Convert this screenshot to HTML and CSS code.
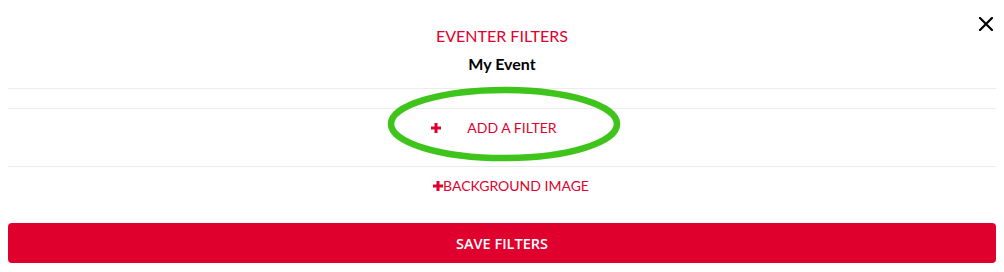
FILE: index.html
```html
<!DOCTYPE html>
<html>
<head>
<meta charset="utf-8">
<link rel="stylesheet" href="styles.css">
</head>
<body>
<div class="modal">
  <button class="close" aria-label="Close">
    <svg width="14" height="14" viewBox="0 0 14 14"><path d="M1 1L13 13M13 1L1 13" stroke="#000" stroke-width="2.2" stroke-linecap="square"/></svg>
  </button>
  <div class="title">EVENTER FILTERS</div>
  <div class="subtitle">My Event</div>
  <div class="divider-top"></div>
  <div class="spacer"></div>
  <div class="row add-row">
    <span class="add">
      <svg class="plus" width="10" height="10" viewBox="0 0 10 10"><path d="M3.5 0h3v3.5H10v3H6.5V10h-3V6.5H0v-3h3.5z" fill="#e0002d"/></svg>
      <span class="add-label">ADD A FILTER</span>
    </span>
    <svg class="annot" width="240" height="80" viewBox="0 0 240 80"><ellipse cx="120" cy="40" rx="113" ry="34" fill="none" stroke="#3ec41a" stroke-width="6.5"/></svg>
  </div>
  <div class="row bg-row">
    <span class="bg">
      <svg class="plus" width="10" height="10" viewBox="0 0 10 10"><path d="M3.5 0h3v3.5H10v3H6.5V10h-3V6.5H0v-3h3.5z" fill="#e0002d"/></svg><span>BACKGROUND IMAGE</span>
    </span>
  </div>
  <button class="save">SAVE FILTERS</button>
</div>
</body>
</html>
```

FILE: styles.css
```css
html, body {
  margin: 0;
  padding: 0;
  background: #fff;
}
body {
  font-family: Lato, "Liberation Sans", sans-serif;
}
.modal {
  position: relative;
  padding: 26px 8px 0;
  display: flex;
  flex-direction: column;
}
.close {
  position: absolute;
  top: 16px;
  right: 10px;
  width: 16px;
  height: 16px;
  padding: 1px;
  border: 0;
  background: none;
  display: flex;
  align-items: center;
  justify-content: center;
}
.title {
  text-align: center;
  color: #e0002d;
  font-size: 16px;
  line-height: 20px;
}
.subtitle {
  margin-top: 8px;
  text-align: center;
  color: #000;
  font-size: 16px;
  font-weight: 700;
  line-height: 20px;
}
.divider-top {
  margin-top: 14px;
  border-bottom: 1px solid #ececec;
}
.spacer {
  height: 19px;
  border-bottom: 1px solid #ececec;
}
.row {
  display: flex;
  justify-content: center;
  font-size: 14px;
  line-height: 20px;
  color: #e0002d;
}
.add-row {
  position: relative;
  padding: 9px 0 28px;
  border-bottom: 1px solid #ececec;
}
.add {
  display: flex;
  align-items: center;
  gap: 26px;
  margin-left: -16px;
}
.plus {
  display: block;
}
.annot {
  position: absolute;
  left: 376px;
  top: -25px;
}
.bg-row {
  padding-top: 9px;
}
.bg {
  display: flex;
  align-items: center;
  margin-left: 18px;
}
.save {
  margin-top: 27px;
  height: 40px;
  border: 0;
  border-radius: 4px;
  background: #e0002d;
  color: #fff;
  font-family: "Open Sans", "Liberation Sans", sans-serif;
  font-weight: 600;
  font-size: 14.5px;
}
```
